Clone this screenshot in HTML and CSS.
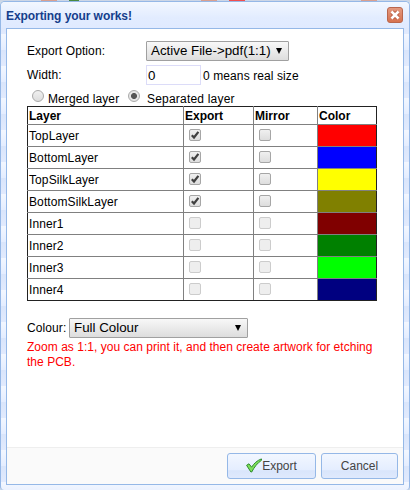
FILE: index.html
```
<!DOCTYPE html>
<html lang="en">
<head>
<meta charset="utf-8">
<title>Exporting your works!</title>
<link rel="stylesheet" href="styles.css">
</head>
<body>
<div class="backdrop"><i class="b1"></i><i class="b2"></i><i class="b3"></i><i class="b4"></i><i class="b5"></i></div>
<div class="window">
  <div class="header"><span class="title">Exporting your works!</span>
    <svg class="close" width="16" height="16" viewBox="0 0 16 16"><defs><linearGradient id="cg" x1="0" y1="0" x2="0" y2="1"><stop offset="0" stop-color="#e39a80"/><stop offset="1" stop-color="#d6704e"/></linearGradient></defs><rect x=".5" y=".5" width="15" height="15" rx="2.5" fill="url(#cg)" stroke="#b9664d"/><path d="M5 5l6 6M11 5l-6 6" stroke="#b5583e" stroke-width="4.4"/><path d="M4.5 4.5l7 7M11.5 4.5l-7 7" stroke="#fff" stroke-width="2.6"/></svg>
  </div>
  <div class="panel">
    <div class="content">
      <div class="row option"><span class="label">Export Option:</span><div class="select s1"><span>Active File-&gt;pdf(1:1)</span><b></b></div></div>
      <div class="row width"><span class="label">Width:</span><div class="input">0</div><span class="hint">0 means real size</span></div>
      <div class="row radios"><i class="radio"></i><span class="merged">Merged layer</span><i class="radio on"></i><span class="separated">Separated layer</span></div>
      <table>
        <colgroup><col class="c1"><col class="c2"><col class="c3"><col class="c4"></colgroup>
        <tr><th>Layer</th><th>Export</th><th>Mirror</th><th>Color</th></tr>
        <tr><td>TopLayer</td><td><i class="check"><svg viewBox="0 0 12 12"><path d="M2.8 6.2L5 8.5L9.4 2.8"/></svg></i></td><td><i class="check"></i></td><td class="red"></td></tr>
        <tr><td>BottomLayer</td><td><i class="check"><svg viewBox="0 0 12 12"><path d="M2.8 6.2L5 8.5L9.4 2.8"/></svg></i></td><td><i class="check"></i></td><td class="blue"></td></tr>
        <tr><td>TopSilkLayer</td><td><i class="check"><svg viewBox="0 0 12 12"><path d="M2.8 6.2L5 8.5L9.4 2.8"/></svg></i></td><td><i class="check"></i></td><td class="yellow"></td></tr>
        <tr><td>BottomSilkLayer</td><td><i class="check"><svg viewBox="0 0 12 12"><path d="M2.8 6.2L5 8.5L9.4 2.8"/></svg></i></td><td><i class="check"></i></td><td class="olive"></td></tr>
        <tr><td>Inner1</td><td><i class="check off"></i></td><td><i class="check off"></i></td><td class="maroon"></td></tr>
        <tr><td>Inner2</td><td><i class="check off"></i></td><td><i class="check off"></i></td><td class="green"></td></tr>
        <tr><td>Inner3</td><td><i class="check off"></i></td><td><i class="check off"></i></td><td class="lime"></td></tr>
        <tr><td>Inner4</td><td><i class="check off"></i></td><td><i class="check off"></i></td><td class="navy"></td></tr>
      </table>
      <div class="row colour"><span class="colour-label">Colour:</span><div class="select s2"><span>Full Colour</span><b></b></div></div>
      <p class="note">Zoom as 1:1, you can print it, and then create artwork for etching<br>the PCB.</p>
    </div>
    <div class="footer">
      <div class="button export"><svg width="16" height="16" viewBox="0 0 16 16"><path d="M.6 7.3L3 5.8L5.6 9.2C8 5.4 11 2.6 15.4 .9L15.6 2.2C11.5 5 8.3 9 5.7 14H4.9Z" fill="#7fe05a" stroke="#2d8a2d" stroke-width="1"/></svg><span>Export</span></div>
      <div class="button cancel"><span>Cancel</span></div>
    </div>
  </div>
</div>
</body>
</html>
```

FILE: styles.css
```
* { box-sizing: border-box; }
body { margin: 0; width: 410px; height: 490px; overflow: hidden; background: #ccd9e8; font: 12px/16px "Liberation Sans", Arial, sans-serif; color: #000; display: flex; flex-direction: column; }
i { display: block; flex: none; }
.backdrop { height: 1px; flex: none; display: flex; background: #ccd6e6; }
.b1 { width: 16px; margin-left: 41px; background: #d9a090; }
.b2 { width: 10px; margin-left: 12px; background: #4a8a40; }
.b3 { width: 16px; margin-left: 122px; background: #d9a090; }
.b4 { width: 16px; margin-left: 12px; background: #f05050; }
.b5 { width: 16px; margin-left: 116px; background: #d9a090; }
.window { height: 489px; flex: none; display: flex; flex-direction: column; border: 1px solid #95b8e7; border-bottom: 0; border-radius: 5px 5px 4px 4px; padding: 0 5px 5px; background: repeating-linear-gradient(to bottom, #f3f7ff 0, #e4edff 16px, #d9e5fb 16px, #e1eafd 32px); }
.header { height: 26px; flex: none; margin: 0 -5px; padding: 0 6px 0 5px; display: flex; justify-content: space-between; background: linear-gradient(to bottom, #f2f7ff 0, #e2ecff 60%, #e0eaff 100%); border-radius: 4px 4px 0 0; }
.title { font-weight: bold; color: #153e8c; line-height: 29px; letter-spacing: -0.07px; }
.close { margin: 5px 0 0; }
.panel { flex: 1; display: flex; flex-direction: column; border: 1px solid #95b8e7; background: #fff; }
.content { flex: 1; padding: 12px 20px 0; }
.row, table td { letter-spacing: 0.1px; }
.row { display: flex; }
.label { width: 119px; }
.option { height: 24px; }
.option .label { line-height: 21px; }
.select { height: 20px; border: 1px solid #a0a0a0; border-radius: 1px; background: linear-gradient(#f8f8f8, #ddd); display: flex; justify-content: space-between; align-items: center; padding: 0 6px 0 4px; font-size: 13.333px; line-height: 18px; letter-spacing: 0; }
.select b { width: 0; height: 0; margin-top: -1px; border: solid transparent; border-width: 6px 3px 0; border-top-color: #000; }
.s1 { width: 143px; }
.s2 { width: 179px; }
.width { height: 24px; }
.width .label { line-height: 21px; }
.input { width: 55px; height: 20px; border: 1px solid #dcdcf8; font-size: 13.333px; line-height: 19px; padding-left: 1px; }
.hint { margin-left: 2px; line-height: 23px; }
.radios { height: 17px; padding-left: 5px; line-height: 21px; }
.radio { width: 12px; height: 12px; margin-top: 1px; border: 1px solid #aaa; border-radius: 50%; background: linear-gradient(#f0f0f0, #ddd); }
.on { background: radial-gradient(circle, #555 0 2.6px, #e6e6e6 3.4px); }
.merged { width: 80px; margin-left: 4px; }
.separated { margin-left: 7px; letter-spacing: 0.2px; }
table { width: 350px; table-layout: fixed; border-collapse: collapse; border: 1px solid #222; }
.c1 { width: 156px; } .c2 { width: 70px; } .c3 { width: 64px; } .c4 { width: 59px; }
tr { height: 22px; }
tr:first-child { height: 18px; }
th, td { border: 1px solid #808080; padding: 0 1px; text-align: left; }
th { line-height: 15px; padding-top: 2px; }
td { line-height: 20px; padding-top: 1px; }
tr:first-child th { border-top-color: #222; }
tr:last-child td { border-bottom-color: #222; }
th:first-child, td:first-child { border-left-color: #222; }
th:last-child, td:last-child { border-right-color: #222; }
.check { width: 12px; height: 12px; margin: -2px 0 0 4px; border: 1px solid #a6a6a6; border-radius: 2px; background: linear-gradient(#f0f0f0, #ddd); }
.check svg { display: block; width: 12px; height: 12px; margin: -1px; fill: none; stroke: #404040; stroke-width: 2.2; }
.off { border-color: #ccc; background: #eee; }
.red { background: red; } .blue { background: blue; } .yellow { background: yellow; } .olive { background: olive; }
.maroon { background: maroon; } .green { background: green; } .lime { background: lime; } .navy { background: navy; }
.colour { margin-top: 17px; height: 22px; line-height: 21px; }
.colour-label { width: 42px; }
.note { margin: 0; line-height: 15px; color: red; white-space: nowrap; letter-spacing: 0.03px; }
.footer { height: 37px; flex: none; border-top: 1px solid #eee; background: #fafafa; display: flex; justify-content: flex-end; gap: 5px; padding: 5px; }
.button { height: 26px; border: 1px solid #95b8e7; border-radius: 3px; color: #444; display: flex; align-items: center; justify-content: center; background: linear-gradient(#f2f7ff 0, #e4edff 68%, #d9e5fb 69%, #dfe9fd 100%); }
.export { width: 89px; } .cancel { width: 77px; }
```
